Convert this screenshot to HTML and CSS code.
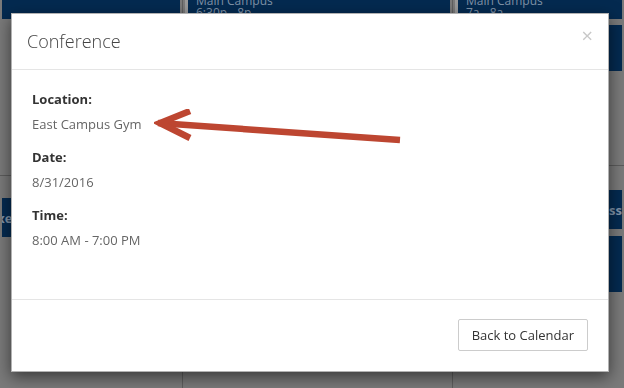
FILE: index.html
```html
<!DOCTYPE html>
<html lang="en">
<head>
<meta charset="UTF-8">
<meta name="viewport" content="width=device-width, initial-scale=1.0">
<title>Calendar</title>
<link rel="stylesheet" href="styles.css">
</head>
<body>

<!-- Calendario de fondo (tapado por el modal) -->
<div class="calendar">
    <div class="day day-first">
        <div class="event ev-top"></div>
        <div class="space" style="height:156px"></div>
        <div class="week-line"></div>
        <div class="space" style="height:22px"></div>
        <div class="event ev-tall"><span class="ev-right">Exec</span></div>
    </div>
    <div class="day">
        <div class="event ev-top">
            <span>Main Campus</span>
            <span>6:30p - 8p</span>
        </div>
    </div>
    <div class="day">
        <div class="event ev-top">
            <span>Main Campus</span>
            <span>7a - 8a</span>
        </div>
        <div class="space" style="height:6px"></div>
        <div class="event" style="height:46px"></div>
        <div class="space" style="height:94px"></div>
        <div class="week-line"></div>
        <div class="space" style="height:24px"></div>
        <div class="event ev-tall"><span class="ev-left">Class</span></div>
        <div class="space" style="height:7px"></div>
        <div class="event" style="height:56px"></div>
    </div>
</div>

<!-- Modal -->
<div class="modal">
    <div class="modal-header">
        <h4 class="modal-title">Conference</h4>
        <span class="close">&times;</span>
    </div>
    <div class="modal-body">
        <dl class="details">
            <dt>Location:</dt>
            <dd>East Campus Gym</dd>
            <dt>Date:</dt>
            <dd>8/31/2016</dd>
            <dt>Time:</dt>
            <dd>8:00 AM - 7:00 PM</dd>
        </dl>
        <svg class="arrow" width="260" height="40" viewBox="0 0 260 40">
            <path d="M4 14 L246 31" stroke="#bd4631" stroke-width="6.5" fill="none"/>
            <path d="M36 2 L6 14 L36 29" stroke="#bd4631" stroke-width="6.5" fill="none" stroke-linejoin="miter"/>
        </svg>
    </div>
    <div class="modal-footer">
        <button class="btn">Back to Calendar</button>
    </div>
</div>

</body>
</html>
```

FILE: styles.css
```css
/* Fondo oscurecido */
body {
    margin: 0;
    height: 388px;
    overflow: hidden;
    background-color: #7a7a7a;
    font-family: "Open Sans", "DejaVu Sans", sans-serif;
}

.calendar {
    display: grid;
    grid-template-columns: 182px 270px 1fr;
    height: 388px;
}

.day {
    display: flex;
    flex-direction: column;
    border-left: 1px solid #5e5e5e;
}

.day-first {
    border-left: none;
}

.event {
    background-color: #042a50;
    color: #8093a8;
    font-size: 12px;
    line-height: 12px;
    margin: 0 2px 0 2px;
    overflow: hidden;
}

.ev-top {
    height: 19px;
    display: flex;
    flex-direction: column;
    justify-content: flex-end;
    padding-left: 8px;
    border-left: 3px solid #9a9a9a;
}

.day-first .ev-top {
    border-left: none;
}

.ev-tall {
    height: 39px;
    display: flex;
    align-items: center;
    font-weight: bold;
    font-size: 13px;
}

.ev-right {
    margin-left: -12px;
}

.ev-left {
    margin-left: auto;
}

.week-line {
    height: 1px;
    background-color: #5c5c5c;
}

/* Modal */
.modal {
    position: fixed;
    top: 13px;
    left: 11px;
    width: 596px;
    background-color: #fff;
    border: 1px solid rgba(0, 0, 0, 0.3);
    box-shadow: 0 5px 15px rgba(0, 0, 0, 0.55);
}

.modal-header {
    display: flex;
    justify-content: space-between;
    align-items: flex-start;
    padding: 15px;
    border-bottom: 1px solid #e5e5e5;
}

.modal-title {
    margin: 0;
    font-size: 18px;
    font-weight: 300;
    line-height: 25px;
    color: #444;
}

.close {
    font-size: 20px;
    line-height: 18px;
    color: #c8c8c8;
    margin: -2px 0 0 0;
}

.modal-body {
    position: relative;
    padding: 20px;
    height: 189px;
}

.details {
    margin: 0;
}

.details dt {
    font-size: 13px;
    font-weight: bold;
    color: #333;
    line-height: 18px;
    margin-top: 15px;
}

.details dt:first-child {
    margin-top: 0;
}

.details dd {
    margin: 7px 0 0 0;
    font-size: 13px;
    color: #666;
    line-height: 18px;
}

.arrow {
    position: absolute;
    top: 39px;
    left: 142px;
}

.modal-footer {
    display: flex;
    justify-content: flex-end;
    padding: 19px 20px 20px;
    border-top: 1px solid #e5e5e5;
}

.btn {
    font-family: "Open Sans", "DejaVu Sans", sans-serif;
    font-size: 13px;
    color: #333;
    background-color: #fff;
    border: 1px solid #ccc;
    border-radius: 2px;
    padding: 6px 13px;
    line-height: 18px;
}
```
